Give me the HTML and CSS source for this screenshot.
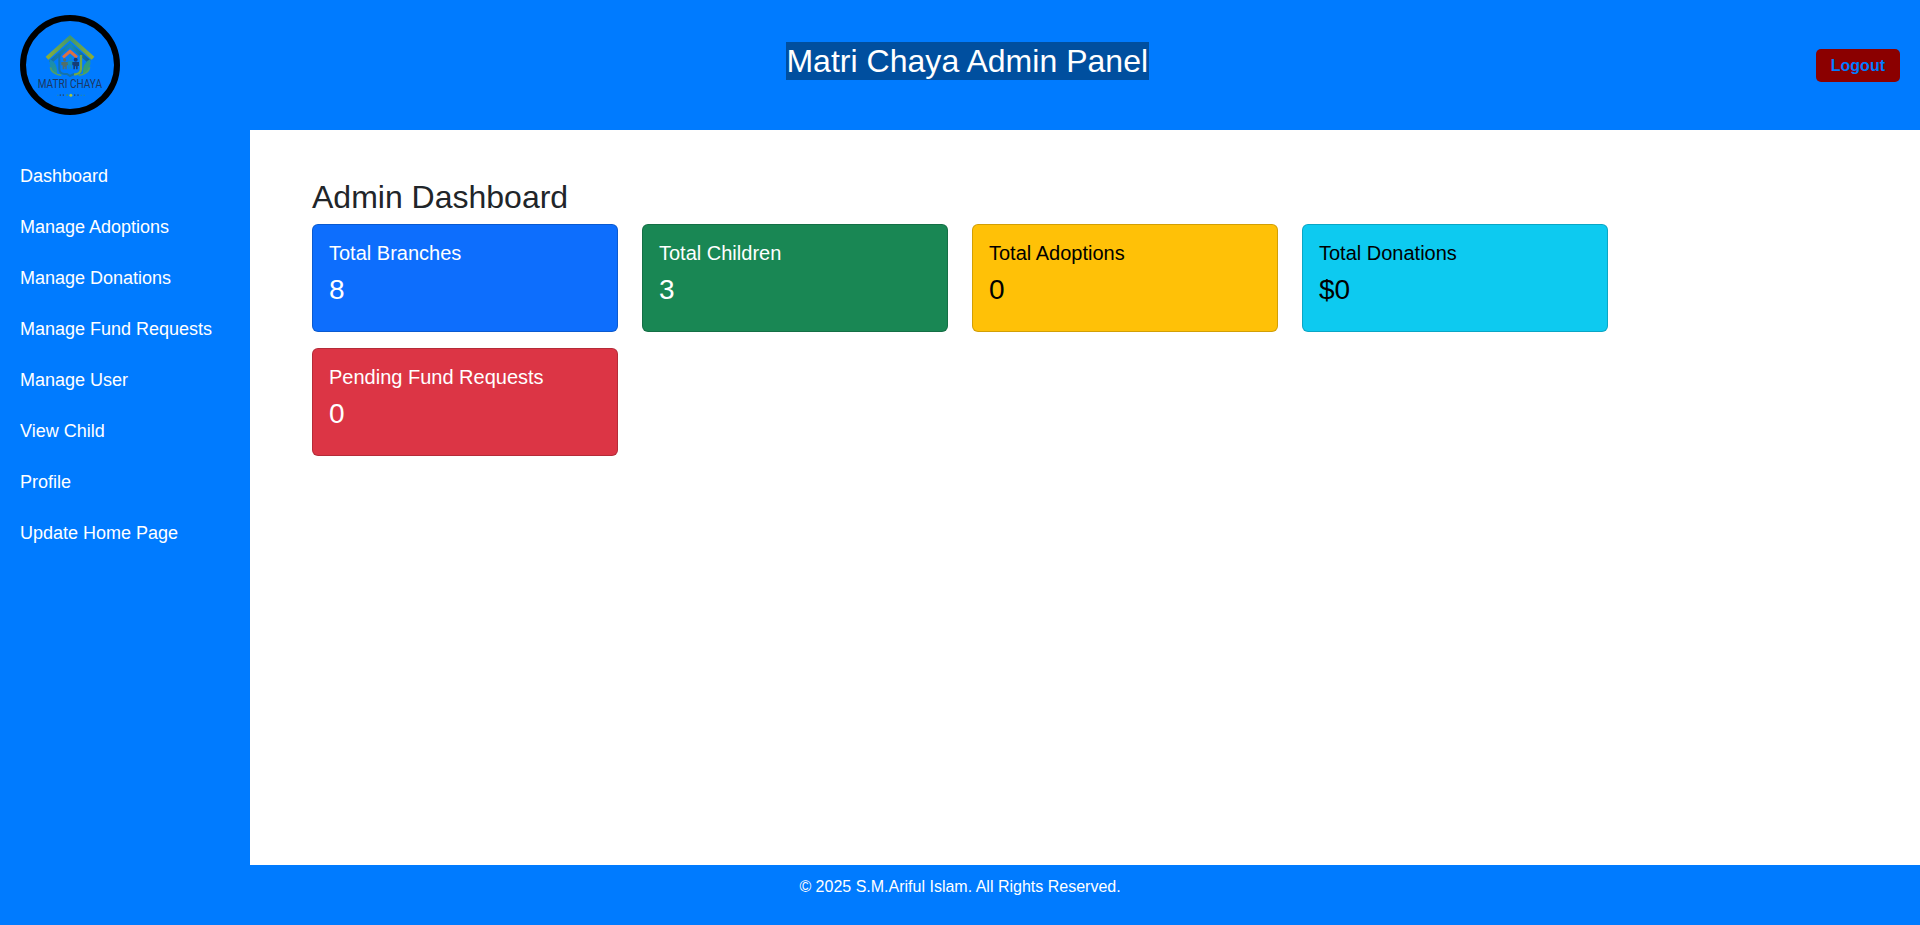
FILE: index.html
```html
<!DOCTYPE html>
<html lang="en">
<head>
<meta charset="utf-8">
<title>Matri Chaya Admin Panel</title>
<link rel="stylesheet" href="styles.css">
</head>
<body>
<header class="header">
  <div class="logo">
    <svg class="logo-art" viewBox="48 48 264 264" role="img" aria-label="Matri Chaya">
      <defs>
        <linearGradient id="roof" x1="0" x2="1"><stop offset="0" stop-color="#8aae38"/><stop offset=".5" stop-color="#3f9772"/><stop offset="1" stop-color="#8fae35"/></linearGradient>
        <linearGradient id="inner" x1="0" x2="1"><stop offset="0" stop-color="#176fa5"/><stop offset=".55" stop-color="#188bb0"/><stop offset="1" stop-color="#0d5f9b"/></linearGradient>
        <linearGradient id="leaf" x1="0" y1="0" x2="1" y2="1"><stop offset="0" stop-color="#1489bd"/><stop offset="1" stop-color="#3ea35f"/></linearGradient>
      </defs>
      <path d="M111 160 L180 98 L249 160" fill="none" stroke="url(#roof)" stroke-width="12"/>
      <path d="M120 172 L180 120 L238 170" fill="none" stroke="url(#inner)" stroke-width="11"/>
      <path d="M148 146 V194 Q150 207 164 207 H171 L180 213 L192 207 H198 Q213 207 213 193 V148" fill="none" stroke="#1673a8" stroke-width="6"/>
      <path d="M213 150 V192 Q212 207 192 209" fill="none" stroke="#76a944" stroke-width="7"/>
      <path d="M159 157 L180 139 L201 157" fill="none" stroke="#dc7142" stroke-width="9"/>
      <path d="M119 162 Q145 175 141 209 Q115 196 119 162Z M241 162 Q215 174 219 209 Q245 196 241 162Z" fill="url(#leaf)"/>
      <path d="M121 187 Q125 207 154 211 M239 187 Q235 207 206 211" fill="none" stroke="#4f9f68" stroke-width="5"/>
      <g fill="#536f68"><circle cx="164" cy="165" r="5"/><path d="M154 171h20v10h-4v12h-4v-8h-3v8h-5v-12h-4z"/></g>
      <g fill="#158eb5"><circle cx="181" cy="159" r="5"/><path d="M173 167h16v10h-3v14h-4v-10h-3v10h-4v-14h-2z"/></g>
      <g fill="#153d75"><circle cx="197" cy="164" r="6"/><path d="M187 171h20v12h-4v10h-5v-9h-3v9h-5v-12h-3z"/></g>
      <text class="logo-name" x="83" y="248" textLength="193" lengthAdjust="spacingAndGlyphs">MATRI CHAYA</text>
      <g fill="#1a508c"><path d="M149 268h4v5h-4zM158 268h4v5h-4zM192 268h4v5h-4zM202 268h4v5h-4z"/><path d="M142 269h3v3h-3zM169 268h5v5h-5zM212 269h3v3h-3zM221 269h3v3h-3z" fill="#36916f"/></g>
      <circle cx="182.500" cy="271" r="4.500" fill="#a7c83d"/>
    </svg>
  </div>
  <h2 class="title">Matri Chaya Admin Panel</h2>
  <a class="logout">Logout</a>
</header>
<div class="body">
  <nav class="sidebar">
    <a class="link">Dashboard</a>
    <a class="link">Manage Adoptions</a>
    <a class="link">Manage Donations</a>
    <a class="link">Manage Fund Requests</a>
    <a class="link">Manage User</a>
    <a class="link">View Child</a>
    <a class="link">Profile</a>
    <a class="link">Update Home Page</a>
  </nav>
  <main class="content">
    <h2 class="heading">Admin Dashboard</h2>
    <div class="cards">
      <section class="card primary"><h5 class="label">Total Branches</h5><p class="value">8</p></section>
      <section class="card success"><h5 class="label">Total Children</h5><p class="value">3</p></section>
      <section class="card warning"><h5 class="label">Total Adoptions</h5><p class="value">0</p></section>
      <section class="card info"><h5 class="label">Total Donations</h5><p class="value">$0</p></section>
      <section class="card danger"><h5 class="label">Pending Fund Requests</h5><p class="value">0</p></section>
    </div>
  </main>
</div>
<footer class="footer">© 2025 S.M.Ariful Islam. All Rights Reserved.</footer>
</body>
</html>
```

FILE: styles.css
```css
* { box-sizing: border-box; }
body {
  margin: 0;
  height: 925px;
  display: flex;
  flex-direction: column;
  font-family: "Liberation Sans", Arial, sans-serif;
  font-size: 16px;
  line-height: 1.5;
  color: #212529;
  background: #fff;
}
.header {
  height: 130px;
  padding: 15px 20px;
  display: flex;
  align-items: center;
  justify-content: space-between;
  background: #007bff;
}
.logo {
  width: 100px;
  height: 100px;
  border: 6px solid #000;
  border-radius: 50%;
}
.logo-art { display: block; width: 88px; height: 88px; overflow: visible; }
.logo-name { font: 400 37px Roboto, sans-serif; fill: #1b3765; }
.title {
  width: 363px;
  margin: 0 0 8px;
  font-size: 32px;
  font-weight: 400;
  line-height: 1.2;
  letter-spacing: 0.03px;
  white-space: nowrap;
  color: #fff;
  background: #004f9f;
}
.logout {
  padding: 8px 15px;
  border-radius: 5px;
  font-weight: 700;
  line-height: 17px;
  color: #007bff;
  background: #8b0000;
}
.body { flex: 1; display: flex; }
.sidebar {
  width: 250px;
  padding: 21px 0 20px;
  background: #007bff;
}
.link {
  display: block;
  padding: 12px 20px;
  font-size: 18px;
  color: #fff;
}
.content { flex: 1; padding: 48px 62px; }
.heading {
  margin: 0 0 8px;
  font-size: 32px;
  font-weight: 400;
  line-height: 1.2;
}
.cards {
  display: grid;
  grid-template-columns: repeat(4, 306px);
  gap: 16px 24px;
}
.card {
  padding: 16px;
  border: 1px solid rgba(0, 0, 0, .175);
  border-radius: 6px;
  color: #fff;
}
.primary { background: #0d6efd; }
.success { background: #198754; }
.warning { background: #ffc107; color: #000; }
.info { background: #0dcaf0; color: #000; }
.danger { background: #dc3545; }
.label {
  margin: 0 0 8px;
  font-size: 20px;
  font-weight: 400;
  line-height: 1.2;
}
.value {
  margin: 0 0 8px;
  font-size: 28px;
  line-height: 1.2;
}
.footer {
  height: 60px;
  padding: 10px;
  text-align: center;
  color: #fff;
  background: #007bff;
}
```
